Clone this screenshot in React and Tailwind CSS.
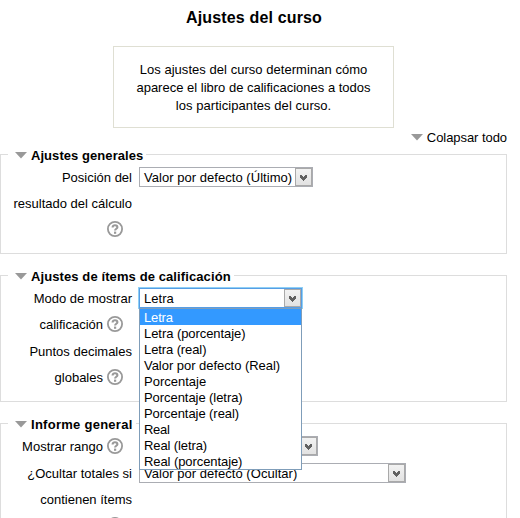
import React from "react";

const OPTIONS = [
  ["Letra", "tracking-[-0.15px]"],
  ["Letra (porcentaje)", "tracking-[-0.06px]"],
  ["Letra (real)", "tracking-[-0.1px]"],
  ["Valor por defecto (Real)", "tracking-[-0.04px]"],
  ["Porcentaje", "tracking-[0px]"],
  ["Porcentaje (letra)", "tracking-[-0.06px]"],
  ["Porcentaje (real)", "tracking-[-0.06px]"],
  ["Real", "tracking-[-0.3px]"],
  ["Real (letra)", "tracking-[-0.1px]"],
  ["Real (porcentaje)", "tracking-[-0.08px]"],
];

function Triangle({ className = "" }) {
  return (
    <svg width="12" height="7" viewBox="0 0 12 7" className={`shrink-0 ${className}`}>
      <path d="M0 0h12L6 6.5z" fill="#999" />
    </svg>
  );
}

function Help() {
  return (
    <svg width="16" height="16" viewBox="0 0 16 16" className="ml-1 mr-[9px] shrink-0">
      <circle cx="8" cy="8" r="7.1" fill="none" stroke="#999" strokeWidth="1.8" />
      <path d="M5.6 6.500C5.600 4.900 6.600 4.300 8 4.300s2.400.7 2.400 1.900c0 1.500-2.300 1.600-2.300 3.300" fill="none" stroke="#999" strokeWidth="2.100" />
      <rect x="7" y="10.600" width="2.200" height="2.200" fill="#999" />
    </svg>
  );
}

function Select({ value, className, focused }) {
  return (
    <div
      className={`flex h-5 shrink-0 items-stretch border bg-white ${
        focused ? "border-[#569de5] shadow-[0_0_0_1px_#8fd0f5]" : "border-[#abadb3]"
      } ${className}`}
    >
      <span className="flex-1 whitespace-nowrap pl-1 leading-[19px] tracking-[0.04px]">{value}</span>
      <span className="flex w-[17px] items-center justify-center border border-[#a9a9a9] bg-linear-to-b from-[#f2f2f2] to-[#e2e2e2] pt-[2px]">
        <svg width="7" height="6" viewBox="0 0 7 6" shapeRendering="crispEdges">
          <path d="M0 0h2v1h1v1h1V1h1V0h2v3H6v1H5v1H4v1H3V5H2V4H1V3H0z" fill="#606060" />
        </svg>
      </span>
    </div>
  );
}

function Section({ title, className, tracking, children }) {
  return (
    <fieldset className={`w-[507px] min-w-0 border border-[#ddd] pl-[7px] ${className}`}>
      <legend className="flex h-[17px] items-center gap-[4px] pl-[7px] pr-[3px] font-bold leading-[17px]">
        <Triangle className="mt-[2px]" />
        <span className={`whitespace-nowrap pt-px ${tracking}`}>{title}</span>
      </legend>
      {children}
    </fieldset>
  );
}

function Row({ lines, className = "", children }) {
  return (
    <div className={`flex items-start ${className}`}>
      <div className="w-[124px] shrink-0">
        {lines.map(([text, help], i) => (
          <div key={i} className="flex h-[26px] items-center justify-end whitespace-nowrap leading-[26px]">
            <span className="pt-0.5">{text}</span>
            {help && <Help />}
          </div>
        ))}
      </div>
      {children}
    </div>
  );
}

export default function App() {
  return (
    <div className="h-[518px] w-[520px] overflow-hidden bg-white font-['Liberation_Sans',Arial,sans-serif] text-[13px] text-black">
      <h2 className="h-[46px] w-[508px] text-center text-[16px] font-bold leading-[36px] tracking-[0.16px]">Ajustes del curso</h2>
      <div className="ml-[113px] h-[82px] w-[281px] border border-[#dfdfd3] pt-[14px] text-center leading-[18px]">
        <p className="tracking-[0.04px]">Los ajustes del curso determinan cómo</p>
        <p>aparece el libro de calificaciones a todos</p>
        <p className="tracking-[0.06px]">los participantes del curso.</p>
      </div>
      <div className="flex h-[18px] w-[507px] items-center justify-end gap-[4px] leading-[18px]">
        <Triangle />
        <span className="pt-0.5 tracking-[-0.06px]">Colapsar todo</span>
      </div>

      <Section title="Ajustes generales" tracking="tracking-[0.06px]" className="h-[108px]">
        <Row className="mt-px" lines={[["Posición del"], ["resultado del cálculo"], ["", true]]}>
          <Select value="Valor por defecto (Último)" className="ml-[7px] mt-[3px] w-[174px]" />
        </Row>
      </Section>

      <Section title="Ajustes de ítems de calificación" tracking="tracking-[0.1px]" className="mt-[13px] h-[135px]">
        <Row className="mt-px" lines={[["Modo de mostrar"], ["calificación", true]]}>
          <div className="relative ml-[7px] mt-[3px]">
            <Select value="Letra" focused className="w-[163px]" />
            <ul className="absolute left-0 top-[20px] z-10 w-[163px] border border-[#7f9db9] bg-white">
              {OPTIONS.map(([label, tracking], i) => (
                <li
                  key={label}
                  className={`h-4 whitespace-nowrap pl-1 leading-[18px] ${tracking} ${i === 0 ? "bg-[#3399ff] text-white" : ""}`}
                >
                  {label}
                </li>
              ))}
            </ul>
          </div>
        </Row>
        <Row className="mt-px" lines={[["Puntos decimales"], ["globales", true]]} />
      </Section>

      <Section title="Informe general" tracking="tracking-[0.27px]" className="mt-[13px] h-[150px]">
        <Row className="mt-px" lines={[["Mostrar rango", true]]}>
          <Select value="" className="ml-[7px] mt-[3px] w-[179px]" />
        </Row>
        <Row className="mt-px" lines={[["¿Ocultar totales si"], ["contienen ítems"], ["", true]]}>
          <Select value="Valor por defecto (Ocultar)" className="ml-[7px] mt-[3px] w-[267px]" />
        </Row>
      </Section>
    </div>
  );
}
